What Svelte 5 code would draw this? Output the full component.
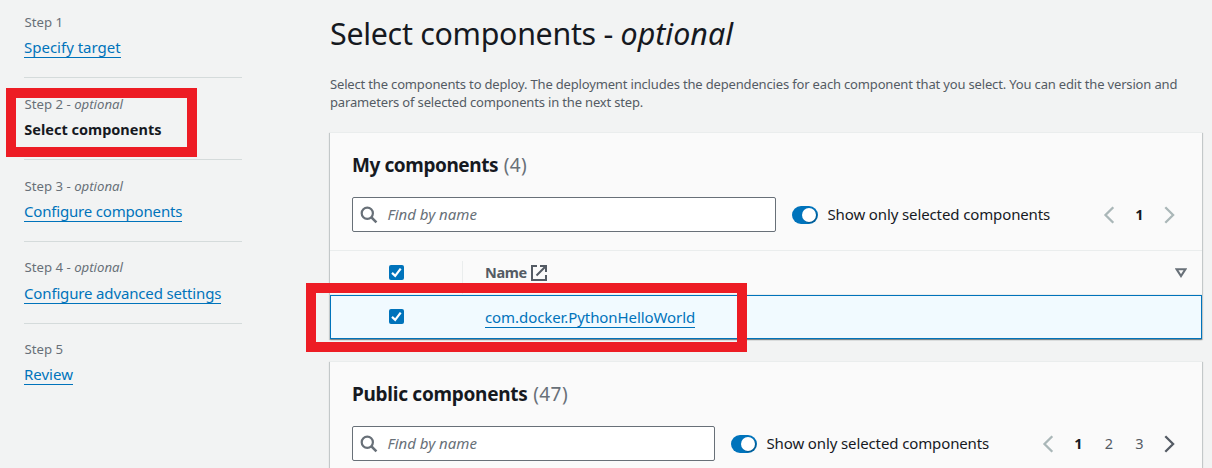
<script>
  const steps = [
    { n: 1, label: 'Specify target', track: 0 },
    { n: 2, label: 'Select components', optional: true, active: true, track: 0 },
    { n: 3, label: 'Configure components', optional: true, track: -0.18 },
    { n: 4, label: 'Configure advanced settings', optional: true, track: -0.15 },
    { n: 5, label: 'Review', track: 0 }
  ];
</script>

{#snippet chevron(dir, enabled)}
  <button class="page" class:enabled aria-label={dir}>
    <svg width="18" height="18" viewBox="0 0 18 18">
      <path d={dir === 'previous' ? 'M13.3 1.2 5.5 9l7.8 7.8' : 'M4.3 1.2 12.1 9l-7.8 7.8'} fill="none" stroke="currentColor" stroke-width="2.3" />
    </svg>
  </button>
{/snippet}

{#snippet checkbox()}
  <span class="check">
    <svg width="15" height="15" viewBox="0 0 15 15"><path d="m3 7.9 3.2 3L11.7 3.6" fill="none" stroke="#fff" stroke-width="2.2" /></svg>
  </span>
{/snippet}

{#snippet toolbar(pages, wide)}
  <div class="toolbar">
    <div class="search" class:wide>
      <svg width="18" height="18" viewBox="0 0 18 18" fill="none" stroke="#687078" stroke-width="2.2">
        <circle cx="7.3" cy="7.2" r="5.6" /><path d="m11.2 11.1 5.2 5.2" stroke-width="2.6" />
      </svg>
      <span>Find by name</span>
    </div>
    <span class="toggle"><i></i></span>
    <span class="toggle-label">Show only selected components</span>
    <nav class="pagination">
      {@render chevron('previous', false)}
      {#each pages as p}
        <span class="page number" class:current={p === 1}>{p}</span>
      {/each}
      {@render chevron('next', pages.length > 1)}
    </nav>
  </div>
{/snippet}

<div class="screen">
  <aside>
    {#each steps as s}
      <div class="step">
        <div class="caption">Step {s.n}{#if s.optional}{' - '}<em>optional</em>{/if}</div>
        {#if s.active}
          <b>{s.label}</b>
        {:else}
          <a href="#step" style="letter-spacing: {s.track}px">{s.label}</a>
        {/if}
      </div>
    {/each}
  </aside>

  <main>
    <h1>Select components - <em>optional</em></h1>
    <p class="intro">Select the components to deploy. The deployment includes the dependencies for each component that you select. You can edit the version and<br />parameters of selected components in the next step.</p>

    <section class="card first">
      <h2 class="mine">My components <span>(4)</span></h2>
      {@render toolbar([1], true)}
      <div class="row head">
        <div class="select">{@render checkbox()}</div>
        <div class="name">
          <span>Name</span>
          <svg width="16" height="16" viewBox="0 0 16 16" fill="none" stroke="#545b64" stroke-width="2">
            <path d="M6 1H1v14h14v-5M9 1h6v6M15 1 5.5 10.5" />
          </svg>
        </div>
        <svg class="sort" width="12" height="10" viewBox="0 0 12 10"><path d="M1.6 1.2h8.8L6 8Z" fill="none" stroke="#687078" stroke-width="2.1" /></svg>
      </div>
      <div class="row selected">
        <div class="select">{@render checkbox()}</div>
        <div class="name"><a href="#component">com.docker.PythonHelloWorld</a></div>
      </div>
    </section>

    <section class="card second">
      <h2>Public components <span>(47)</span></h2>
      {@render toolbar([1, 2, 3], false)}
    </section>
  </main>

  <div class="mark mark-step"></div>
  <div class="mark mark-row"></div>
</div>

<style>
  :global(body) { overflow: hidden; background: #f2f3f3; }
  .screen {
    position: relative; display: flex; width: 1212px; height: 468px; overflow: hidden;
    font: 15px/22px "Noto Sans", "Open Sans", sans-serif; color: #16191f; background: #f2f3f3;
  }
  .screen * { box-sizing: border-box; }
  aside { flex: none; width: 218px; margin: -4px 88px 0 24px; }
  .step { height: 82px; padding-top: 17px; border-bottom: 1px solid #d5dbdb; }
  .step:last-child { border: 0; padding-top: 16px; }
  .step:nth-child(4) { padding-top: 16px; }
  .step:nth-child(4) .caption { height: 23px; }
  .caption { height: 22px; text-indent: 0.5px; font-size: 13.2px; line-height: 18px; color: #687078; white-space: pre; }
  .step b { display: block; text-indent: 0.3px; font-size: 14.5px; line-height: 25px; white-space: nowrap; }
  a { display: inline-block; height: 23px; line-height: 24px; color: #0073bb; text-decoration: none; border-bottom: 1px solid #0073bb; white-space: nowrap; }
  main { flex: none; width: 872px; }
  h1 { margin: 14px 0 0; font-size: 30.4px; line-height: 40px; font-weight: 400; letter-spacing: -0.3px; white-space: nowrap; }
  h1 em { letter-spacing: 0; }
  .intro { margin: 21px 0 0; font-size: 13px; line-height: 18px; letter-spacing: -0.165px; color: #545b64; white-space: nowrap; }
  .card {
    background: #fafafa; border-top: 1px solid #eaeded;
    box-shadow: 0 1px 1px 0 rgba(0,28,36,.3), 1px 1px 1px 0 rgba(0,28,36,.15), -1px 1px 1px 0 rgba(0,28,36,.15);
  }
  .first { margin-top: 21px; height: 207px; }
  .second { margin-top: 22px; height: 160px; }
  h2 { margin: 0; padding: 19px 22px 0; font-size: 19px; line-height: 26px; letter-spacing: -0.27px; }
  h2.mine { letter-spacing: -0.42px; }
  h2 span { font-weight: 400; color: #687078; letter-spacing: 0.4px; margin-left: 1px; }
  .toolbar { display: flex; align-items: center; height: 35px; margin: 19px 22px 18px; }
  .search { display: flex; align-items: center; width: 363px; height: 35px; padding-left: 7px; background: #fff; border: 1px solid #687078; border-radius: 2px; color: #687078; font-style: italic; }
  .search.wide { width: 424px; }
  .search span { margin-left: 9.5px; padding-bottom: 2px; }
  .toggle { display: flex; align-items: center; justify-content: flex-end; width: 26px; height: 18px; margin-left: 16px; padding-right: 2px; border-radius: 9px; background: #0073bb; }
  .toggle i { width: 14px; height: 14px; border-radius: 50%; background: #fff; box-shadow: 1px 1px 1px rgba(0,0,0,.25); }
  .toggle-label { margin-left: 9.5px; padding-bottom: 2px; letter-spacing: -0.12px; white-space: nowrap; }
  .pagination { display: flex; gap: 10.5px; margin-left: auto; }
  .page { display: flex; align-items: center; justify-content: center; width: 20px; height: 22px; padding: 0; border: 0; background: none; color: #aab7b8; }
  .page.enabled, .number { color: #545b64; }
  .number.current { color: #16191f; font-weight: 700; }
  .number { font-size: 14.5px; padding-bottom: 2px; }
  .row { display: flex; align-items: center; }
  .head { height: 45px; border-top: 1px solid #eaeded; border-bottom: 1px solid #eaeded; color: #545b64; }
  .head .select { align-self: flex-end; height: 33px; border-right: 1px solid #eaeded; padding-top: 4px; }
  .select { width: 133px; padding-left: 59px; }
  .check { display: block; width: 15px; height: 15px; border-radius: 2px; background: #0073bb; }
  .check svg { display: block; }
  .name { display: flex; align-items: center; margin-left: 22px; }
  .head .name span { font-size: 14.5px; font-weight: 700; letter-spacing: -0.4px; margin-right: 4px; padding-bottom: 2px; }
  .sort { margin: 0 15px 0 auto; }
  .selected { height: 44px; padding-bottom: 2px; border: 1px solid #0073bb; background: #f1faff; }
  .selected .select { width: 132px; padding-left: 58px; }
  .selected a { letter-spacing: -0.08px; }
  .mark { position: absolute; border: 10px solid #ed1c24; }
  .mark-step { left: 6px; top: 88px; width: 191px; height: 69px; }
  .mark-row { left: 306px; top: 283px; width: 441px; height: 69px; }
</style>
